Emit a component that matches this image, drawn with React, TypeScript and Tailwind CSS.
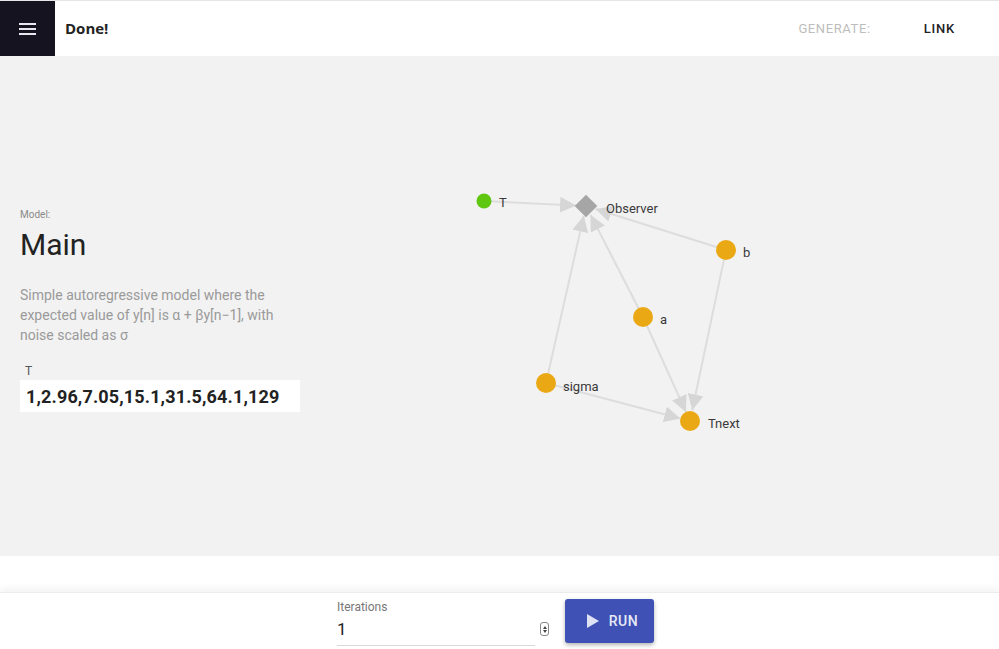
import React from "react";

type N = { id: string; x: number; y: number; color: string; r: number; label: string; lx: number; ly: number };

const OY = 56;
const nodes: N[] = [
  { id: "T", x: 484, y: 201, color: "#5fc70f", r: 7.5, label: "T", lx: 499, ly: 207 },
  { id: "b", x: 726, y: 250, color: "#eaa914", r: 10, label: "b", lx: 743, ly: 257 },
  { id: "a", x: 643, y: 317, color: "#eaa914", r: 10, label: "a", lx: 660, ly: 324 },
  { id: "sigma", x: 546, y: 383, color: "#eaa914", r: 10, label: "sigma", lx: 563, ly: 391 },
  { id: "Tnext", x: 690, y: 421, color: "#eaa914", r: 10, label: "Tnext", lx: 708, ly: 428 },
];
const obs = { x: 586, y: 206 };

const pos: Record<string, { x: number; y: number }> = { Observer: obs };
nodes.forEach((n) => (pos[n.id] = { x: n.x, y: n.y }));

const edges: [string, string, number][] = [
  ["T", "Observer", 10],
  ["a", "Observer", 10],
  ["sigma", "Observer", 10],
  ["b", "Observer", 10],
  ["a", "Tnext", 10],
  ["b", "Tnext", 11],
  ["sigma", "Tnext", 10],
];

function Graph() {
  return (
    <svg className="absolute inset-0" width={999} height={500} viewBox={`0 ${OY} 999 500`}>
      <defs>
        <marker id="arr" viewBox="0 0 10 10" refX="10" refY="5" markerWidth="8" markerHeight="8" markerUnits="strokeWidth" orient="auto">
          <path d="M0,0 L10,5 L0,10 z" fill="#d6d6d6" />
        </marker>
      </defs>
      {edges.map(([s, t, d], i) => {
        const a = pos[s];
        const b = pos[t];
        const dx = b.x - a.x;
        const dy = b.y - a.y;
        const L = Math.hypot(dx, dy);
        const ex = b.x - (dx / L) * d;
        const ey = b.y - (dy / L) * d;
        return (
          <line key={i} x1={a.x} y1={a.y} x2={ex} y2={ey} stroke="#dddddd" strokeWidth={2} markerEnd="url(#arr)" />
        );
      })}
      <rect x={obs.x - 8} y={obs.y - 8} width={16} height={16} fill="#a6a6a6" transform={`rotate(45 ${obs.x} ${obs.y})`} />
      <text x={606} y={213} fontSize={13} fill="#3a3a3a" fontFamily="Roboto, sans-serif">Observer</text>
      {nodes.map((n) => (
        <g key={n.id}>
          <circle cx={n.x} cy={n.y} r={n.r} fill={n.color} />
          <text x={n.lx} y={n.ly} fontSize={13} fill="#3a3a3a" fontFamily="Roboto, sans-serif">{n.label}</text>
        </g>
      ))}
    </svg>
  );
}

export default function App() {
  return (
    <div className="w-[999px] h-[649px] flex flex-col bg-white overflow-hidden" style={{ fontFamily: "Roboto, 'Liberation Sans', sans-serif" }}>
      <header className="h-[56px] flex items-stretch border-t border-[#e6e6e6] bg-white shrink-0">
        <div className="w-[55px] bg-[#15131f] flex flex-col items-center justify-center gap-[3px]">
          <span className="block w-[17px] h-[2px] bg-[#e8e6ef]" />
          <span className="block w-[17px] h-[2px] bg-[#e8e6ef]" />
          <span className="block w-[17px] h-[2px] bg-[#e8e6ef]" />
        </div>
        <div className="flex-1 flex items-center pl-[10px]">
          <span className="text-[15px] font-bold text-[#222]" style={{ fontFamily: "'Open Sans', sans-serif" }}>Done!</span>
        </div>
        <div className="flex items-center pr-[44px]">
          <span className="text-[13px] text-[#bdbdbd] tracking-[0.6px]">GENERATE:</span>
          <span className="ml-[53px] text-[13px] font-medium text-[#222] tracking-[0.8px]">LINK</span>
        </div>
      </header>
      <main className="relative h-[500px] bg-[#f2f2f2] shrink-0">
        <Graph />
        <div className="relative w-[300px] pl-[20px] pt-[152px]">
          <div className="text-[10px] leading-[14px] text-[#8a8a8a]">Model:</div>
          <div className="mt-[5px] text-[30px] leading-[36px] text-[#222]">Main</div>
          <p className="mt-[22px] text-[14px] leading-[20px] text-[#9a9a9a] w-[280px]">
            Simple autoregressive model where the expected value of y[n] is α + βy[n−1], with noise scaled as σ
          </p>
          <div className="mt-[18px] pl-[5px] text-[12px] leading-[16px] text-[#555]">T</div>
          <div className="mt-[1px] h-[32px] w-[280px] bg-white flex items-center px-[6px] text-[18px] font-bold text-[#222] tracking-[0.15px]">
            1,2.96,7.05,15.1,31.5,64.1,129
          </div>
        </div>
      </main>
      <div className="h-[36px] bg-white shrink-0" />
      <footer className="flex-1 bg-white shadow-[0_-3px_8px_rgba(0,0,0,0.06)] border-t border-[#ececec] flex justify-center pr-[8px]">
        <div className="w-[212px] flex items-start pt-[7px]">
          <div className="w-[200px]">
            <div className="text-[12px] leading-[14px] text-[#777]">Iterations</div>
            <div className="mt-[3px] h-[29px] border-b border-[#d9d9d9] text-[17px] leading-[24px] text-[#222]">1</div>
          </div>
          <div className="ml-[5px] mt-[22px] w-[9px] h-[14px] rounded-[3px] border border-[#888] flex flex-col items-center justify-center gap-[1px]">
            <span className="block w-0 h-0 border-l-[2px] border-r-[2px] border-b-[3px] border-l-transparent border-r-transparent border-b-[#444]" />
            <span className="block w-0 h-0 border-l-[2px] border-r-[2px] border-t-[3px] border-l-transparent border-r-transparent border-t-[#444]" />
          </div>
        </div>
        <button className="ml-[16px] mt-[6px] w-[89px] h-[44px] rounded-[3px] bg-[#3f51b5] shadow-[0_2px_4px_rgba(0,0,0,0.3)] flex items-center justify-center pl-[6px] gap-[10px] text-white">
          <svg width="12" height="14" viewBox="0 0 12 14"><path d="M0,0 L12,7 L0,14 z" fill="#dfe2f3" /></svg>
          <span className="text-[14px] font-medium tracking-[0.5px] text-[#e8eaf6]">RUN</span>
        </button>
      </footer>
    </div>
  );
}
